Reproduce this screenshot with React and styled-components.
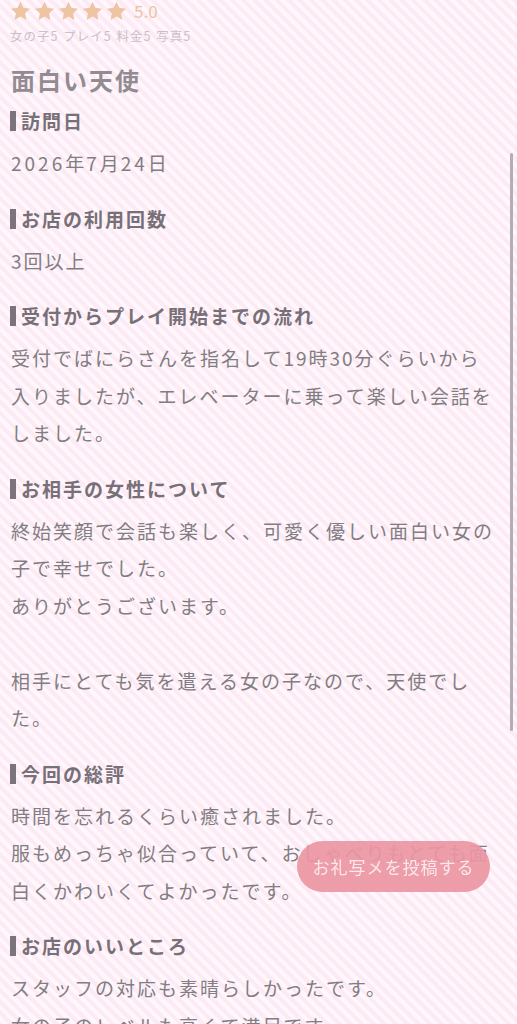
import React from "react";
import styled, { createGlobalStyle } from "styled-components";

const Global = createGlobalStyle`
  html, body {
    margin: 0;
    padding: 0;
  }
  body {
    font-family: "Noto Sans CJK JP", "Noto Sans", sans-serif;
    background-color: #fdf2f8;
    background-image: repeating-linear-gradient(
      45deg,
      #fcebf5 0px,
      #fcebf5 4px,
      #fff7fb 4px,
      #fff7fb 8px
    );
    min-height: 100vh;
  }
`;

const Page = styled.main`
  padding: 1px 22px 40px 11px;
  width: 517px;
  box-sizing: border-box;
`;

const RatingRow = styled.div`
  display: flex;
  align-items: center;
  height: 20px;
  margin-left: -1px;
`;

const Stars = styled.div`
  display: flex;
  gap: 3px;
`;

const Score = styled.span`
  margin-left: 7px;
  font-size: 17px;
  color: #ebc3a3;
  line-height: 20px;
`;

const SubScores = styled.div`
  margin-top: 7px;
  font-size: 12.5px;
  line-height: 16px;
  letter-spacing: 1px;
  word-spacing: 1px;
  color: #cbc0c7;
  margin-left: -1px;
`;

const Title = styled.h1`
  margin: 19px 0 9px;
  font-size: 24px;
  line-height: 34px;
  font-weight: 700;
  letter-spacing: 2px;
  color: #928c92;
`;

const Section = styled.section`
  margin-bottom: 22px;
`;

const Heading = styled.h2`
  display: flex;
  align-items: center;
  margin: 0 0 8px;
  font-size: 19px;
  line-height: 30px;
  font-weight: 700;
  letter-spacing: 2px;
  color: #787078;
  &::before {
    content: "";
    width: 6px;
    height: 20px;
    margin-left: -1px;
    margin-right: 5px;
    background: #7c747c;
  }
`;

const Body = styled.p`
  margin: 0;
  font-size: 19px;
  line-height: 37.5px;
  letter-spacing: 2px;
  color: #827d82;
  white-space: pre-wrap;
  line-break: strict;
`;

const Digits = styled.span`
  letter-spacing: 3px;
`;

const ScrollThumb = styled.div`
  position: fixed;
  right: 4px;
  top: 153px;
  width: 3px;
  height: 578px;
  border-radius: 2px;
  background: #b5adb5;
`;

const PostButton = styled.button`
  position: fixed;
  left: 297px;
  top: 841px;
  width: 193px;
  height: 51px;
  border: none;
  border-radius: 26px;
  background: rgba(236, 150, 162, 0.92);
  color: #fbe8ec;
  font-family: "Noto Sans CJK JP", sans-serif;
  font-size: 17px;
  letter-spacing: 1px;
  padding: 0;
`;

const Star = () => (
  <svg width="21" height="20" viewBox="0 0 24 23">
    <path
      d="M12 0.8l3.3 7.1 7.7 0.9-5.7 5.3 1.5 7.7L12 17.9l-6.8 3.9 1.5-7.7L1 8.8l7.7-0.9z"
      fill="#efc4a2"
    />
  </svg>
);

const sections = [
  { h: "訪問日", b: <><Digits>2026</Digits>年<Digits>7</Digits>月<Digits>24</Digits>日</> },
  { h: "お店の利用回数", b: "3回以上" },
  {
    h: "受付からプレイ開始までの流れ",
    b: "受付でばにらさんを指名して19時30分ぐらいから入りましたが、エレベーターに乗って楽しい会話をしました。",
  },
  {
    h: "お相手の女性について",
    b: "終始笑顔で会話も楽しく、可愛く優しい面白い女の子で幸せでした。\nありがとうございます。\n\n相手にとても気を遣える女の子なので、天使でした。",
  },
  {
    h: "今回の総評",
    b: "時間を忘れるくらい癒されました。\n服もめっちゃ似合っていて、おしゃべりもとても面白くかわいくてよかったです。",
  },
  {
    h: "お店のいいところ",
    b: "スタッフの対応も素晴らしかったです。\n女の子のレベルも高くて満足です。",
  },
];

export default function App() {
  return (
    <>
      <Global />
      <Page>
        <RatingRow>
          <Stars>
            <Star />
            <Star />
            <Star />
            <Star />
            <Star />
          </Stars>
          <Score>5.0</Score>
        </RatingRow>
        <SubScores>女の子5 プレイ5 料金5 写真5</SubScores>
        <Title>面白い天使</Title>
        {sections.map((s) => (
          <Section key={s.h}>
            <Heading>{s.h}</Heading>
            <Body>{s.b}</Body>
          </Section>
        ))}
      </Page>
      <ScrollThumb />
      <PostButton>お礼写メを投稿する</PostButton>
    </>
  );
}
